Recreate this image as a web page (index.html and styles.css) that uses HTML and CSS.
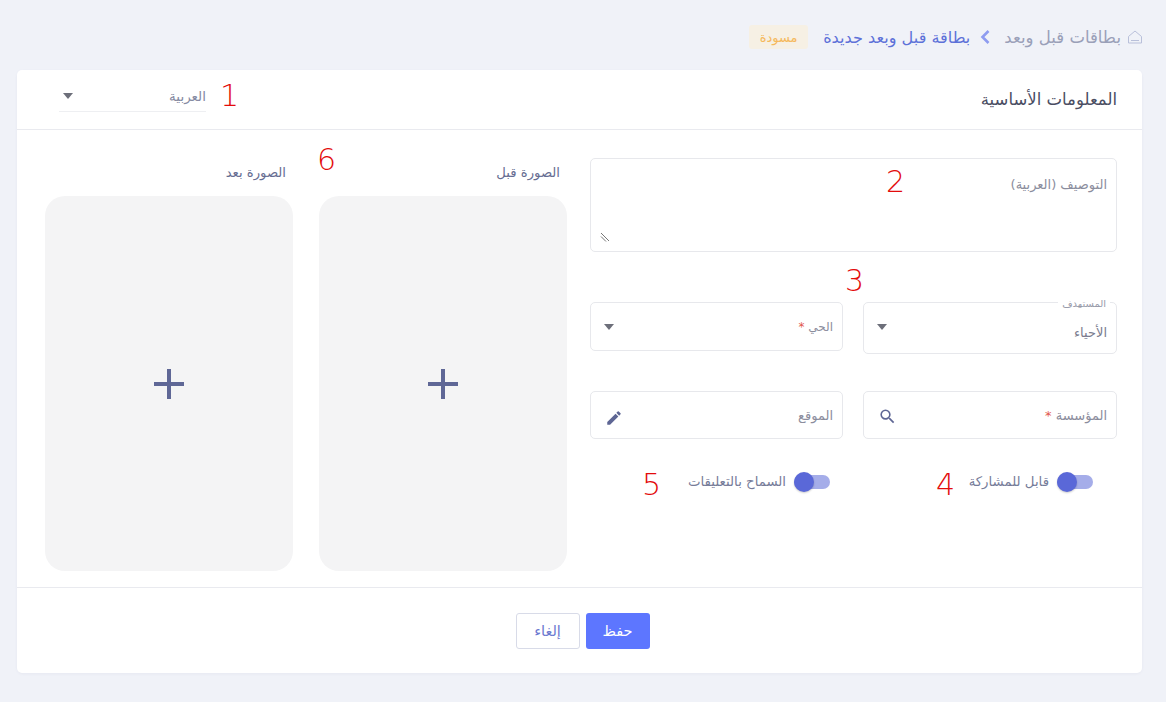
FILE: index.html
```html
<!DOCTYPE html>
<html lang="ar" dir="rtl">
<head>
<meta charset="utf-8">
<title>بطاقة قبل وبعد جديدة</title>
<link rel="stylesheet" href="styles.css">
</head>
<body>
<nav class="crumbs">
  <svg class="home" width="14" height="14" viewBox="0 0 14 14" fill="none" stroke="#b9c0da" stroke-width="1"><path d="M.5 6.500 7 1l6.500 5.500V13H.5z"/><path d="M3 10.500h8"/></svg>
  <span class="crumb-root">بطاقات قبل وبعد</span>
  <svg class="chev" width="10" height="14" viewBox="0 0 10 14" fill="none" stroke="#8e9cf0" stroke-width="2.600"><path d="M8.500 1 2.500 7l6 6"/></svg>
  <span class="crumb-current">بطاقة قبل وبعد جديدة</span>
  <span class="badge">مسودة</span>
</nav>
<main class="card">
  <header class="card-head">
    <h1 class="card-title">المعلومات الأساسية</h1>
    <div class="lang">
      <span>العربية</span>
      <i class="caret"></i>
    </div>
  </header>
  <section class="card-body">
    <div class="form">
      <div class="box box-area"><span class="ph">التوصيف (العربية)</span>
        <svg class="grip" width="10" height="10" viewBox="0 0 10 10" stroke="#777" stroke-width="1"><path d="M1 1 9 9M1 4.500 6 9.500"/></svg>
      </div>
      <div class="grid">
        <div class="box box-audience">
          <span class="float">المستهدف</span>
          <span class="value">الأحياء</span>
          <i class="caret"></i>
        </div>
        <div class="box box-select">
          <span class="ph-small"><span class="req">الحي <b>*</b></span></span>
          <i class="caret"></i>
        </div>
        <div class="box box-field">
          <span class="ph"><span class="req">المؤسسة <b>*</b></span></span>
          <svg class="icon-search" width="19" height="19" viewBox="0 0 24 24" fill="#5e6694"><path d="M15.500 14h-.79l-.28-.27A6.470 6.470 0 0 0 16 9.500 6.500 6.500 0 1 0 9.500 16c1.610 0 3.090-.59 4.230-1.570l.27.28v.79l5 4.990L20.490 19l-4.990-5zm-6 0C7.010 14 5 11.990 5 9.500S7.010 5 9.500 5 14 7.010 14 9.500 11.990 14 9.500 14z"/></svg>
        </div>
        <div class="box box-field">
          <span class="ph">الموقع</span>
          <svg class="icon-pencil" width="18" height="18" viewBox="0 0 24 24" fill="#5e6694"><path d="M3 17.250V21h3.750L17.810 9.940l-3.750-3.750L3 17.250zM20.710 7.040a1 1 0 0 0 0-1.410l-2.340-2.340a1 1 0 0 0-1.410 0l-1.830 1.830 3.750 3.750 1.830-1.830z"/></svg>
        </div>
        <label class="switch-row switch-a"><span class="switch"><i></i></span><span>قابل للمشاركة</span></label>
        <label class="switch-row switch-b"><span class="switch"><i></i></span><span>السماح بالتعليقات</span></label>
      </div>
    </div>
    <div class="pics">
      <div class="pic">
        <div class="pic-label">الصورة قبل</div>
        <div class="pic-box"><svg width="30" height="30" viewBox="0 0 30 30" fill="#5f6796"><path d="M13 0h4v13h13v4H17v13h-4V17H0v-4h13z"/></svg></div>
      </div>
      <div class="pic">
        <div class="pic-label">الصورة بعد</div>
        <div class="pic-box"><svg width="30" height="30" viewBox="0 0 30 30" fill="#5f6796"><path d="M13 0h4v13h13v4H17v13h-4V17H0v-4h13z"/></svg></div>
      </div>
    </div>
  </section>
  <footer class="card-foot">
    <button class="btn btn-primary" type="button">حفظ</button>
    <button class="btn btn-ghost" type="button">إلغاء</button>
  </footer>
</main>
<span class="note n1">1</span>
<span class="note n2">2</span>
<span class="note n3">3</span>
<span class="note n4">4</span>
<span class="note n5">5</span>
<span class="note n6">6</span>
</body>
</html>
```

FILE: styles.css
```css
* { box-sizing: border-box; }
html, body { height: 100%; }
body {
  margin: 0;
  padding: 0 24px 29px 17px;
  background: #f0f2f8;
  font-family: "DejaVu Sans", "Noto Sans", sans-serif;
  color: #5e6694;
  overflow: hidden;
  position: relative;
}
.crumbs {
  height: 70px;
  display: flex;
  align-items: center;
  padding-top: 4px;
  font-size: 16.5px;
}
.crumb-root { color: #9aa0b8; margin-right: 7px; }
.crumb-current { color: #5d71d8; font-size: 16.1px; }
.chev { margin: 0 14px 0 10px; }
.badge {
  margin-right: 15px;
  width: 59px;
  height: 24px;
  background: #f6f0e4;
  color: #f5b95c;
  font-size: 13px;
  border-radius: 3px;
  display: flex;
  align-items: center;
  justify-content: center;
}
.card {
  width: 1125px;
  height: 603px;
  background: #fff;
  border-radius: 5px;
  box-shadow: 0 1px 3px rgba(80, 90, 140, 0.06);
  display: flex;
  flex-direction: column;
}
.card-head {
  height: 60px;
  flex: none;
  border-bottom: 1px solid #e9eaef;
  display: flex;
  align-items: flex-start;
  justify-content: space-between;
  padding: 0 25px 0 0;
}
.card-title { margin: 20px 0 0; font-size: 16.5px; line-height: 20px; font-weight: 400; color: #4a4d62; }
.lang {
  width: 147px;
  height: 32px;
  margin-top: 10px;
  margin-left: 42px;
  border-bottom: 1px solid #eeeff2;
  display: flex;
  align-items: center;
  justify-content: space-between;
  font-size: 13.5px;
  color: #858aa2;
  padding-left: 4px;
}
.caret {
  width: 0; height: 0;
  border-left: 5px solid transparent;
  border-right: 5px solid transparent;
  border-top: 6px solid #6d6f7a;
}
.card-body {
  flex: 1;
  display: flex;
  justify-content: space-between;
  padding: 28px 25px 16px 28px;
  border-bottom: 1px solid #e9eaef;
}
.form { width: 527px; }
.box {
  background: #fff;
  border: 1px solid #e7e8ec;
  border-radius: 5px;
  position: relative;
  font-size: 13px;
  color: #8b8d9d;
  display: flex;
  justify-content: space-between;
  align-items: center;
  padding: 0 9px 0 13px;
}
.box-area { height: 94px; align-items: flex-start; padding-top: 18px; }
.grip { position: absolute; left: 9px; bottom: 9px; }
.grid {
  display: grid;
  grid-template-columns: 254px 253px;
  column-gap: 20px;
  margin-top: 50px;
}
.box-audience { height: 52px; padding-top: 4px; }
.box-audience .caret { margin-bottom: 6px; }
.box-audience .value { margin-top: 5px; color: #7a7c8e; font-size: 13px; }
.float {
  position: absolute;
  top: -3px;
  right: 6px;
  padding: 0 4px;
  background: #fff;
  font-size: 10px;
  color: #9a9cab;
  height: 8px;
  line-height: 8px;
  overflow: hidden;
}
.ph-small { font-size: 12px; }
.box-select { height: 49px; }
.box-field { height: 48px; margin-top: 37px; padding-left: 14px; }
.icon-search { margin-top: 2px; }
.icon-pencil { margin-top: 5px; }
.req b { color: #e2574c; font-weight: 400; }
.switch-row {
  display: flex;
  align-items: center;
  gap: 8px;
  margin-top: 35px;
  font-size: 13.3px;
  color: #767c99;
}
.switch-a { padding-right: 24px; }
.switch-b { padding-right: 13px; }
.switch {
  width: 36px;
  height: 14px;
  border-radius: 7px;
  background: #a5ade9;
  position: relative;
  display: block;
}
.switch i {
  position: absolute;
  left: 0;
  top: -3px;
  width: 20px;
  height: 20px;
  border-radius: 50%;
  background: #5a68d8;
  box-shadow: 0 1px 2px rgba(0, 0, 0, 0.2);
}
.pics { display: flex; gap: 26px; }
.pic { width: 248px; }
.pic-label {
  height: 38px;
  padding-top: 7px;
  padding-right: 7px;
  font-size: 13.2px;
  color: #666d92;
}
.pic-box {
  height: 375px;
  background: #f4f4f5;
  border-radius: 20px;
  display: flex;
  align-items: center;
  justify-content: center;
}
.card-foot {
  height: 85px;
  flex: none;
  display: flex;
  justify-content: center;
  align-items: flex-start;
  gap: 6px;
  padding: 25px 0 0 6px;
}
.btn {
  width: 64px;
  height: 36px;
  border-radius: 3px;
  font-family: inherit;
  font-size: 14.5px;
  padding: 0;
}
.btn-primary { background: #5d76ff; color: #fff; border: 0; }
.btn-ghost { background: #fff; color: #6b78cf; border: 1px solid #d8dbe8; }
.note {
  position: absolute;
  color: #e30b0b;
  font-family: "DejaVu Sans Light", "DejaVu Sans", sans-serif;
  font-weight: 200;
  font-size: 30px;
  line-height: 30px;
}
.n1 { left: 220px; top: 81px; }
.n2 { left: 886px; top: 167px; }
.n3 { left: 845px; top: 266px; }
.n4 { left: 936px; top: 470px; }
.n5 { left: 642px; top: 470px; }
.n6 { left: 317px; top: 145px; }
```
